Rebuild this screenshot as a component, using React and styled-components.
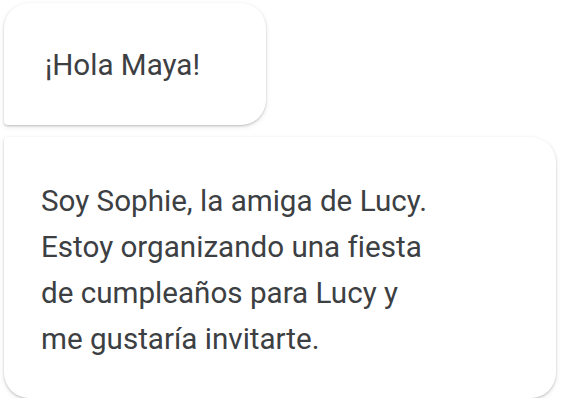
import React from "react";
import styled, { createGlobalStyle } from "styled-components";

const Global = createGlobalStyle`
  html, body { margin: 0; padding: 0; background: #ffffff; }
  body { font-family: Roboto, "Noto Sans", sans-serif; }
`;

const Thread = styled.div`
  display: flex;
  flex-direction: column;
  align-items: flex-start;
  gap: 12px;
  padding: 3px 6px 0 4px;
  box-sizing: border-box;
  width: 562px;
`;

const Bubble = styled.div`
  background: #ffffff;
  color: #3c4043;
  font-family: Roboto, "Noto Sans", sans-serif;
  font-size: 29.6px;
  line-height: 46px;
  letter-spacing: 0;
  font-variant-ligatures: none;
  box-shadow: 0 1px 2px rgba(60, 64, 67, 0.25), 0 2px 5px rgba(60, 64, 67, 0.12);
  border-radius: ${(p) => (p.$first ? "25px 25px 25px 4px" : "4px 25px 25px 25px")};
  box-sizing: border-box;
  width: ${(p) => p.$width}px;
  height: ${(p) => p.$height}px;
  padding: ${(p) => p.$padding};
`;

export default function App() {
  return (
    <>
      <Global />
      <Thread>
        <Bubble $first $width={262} $height={122} $padding="39px 0 0 41px">
          ¡Hola Maya!
        </Bubble>
        <Bubble $width={552} $height={261} $padding="41px 0 0 37px">
          Soy Sophie, la amiga de Lucy.
          <br />
          Estoy organizando una fiesta
          <br />
          de cumpleaños para Lucy y
          <br />
          me gustaría invitarte.
        </Bubble>
      </Thread>
    </>
  );
}
